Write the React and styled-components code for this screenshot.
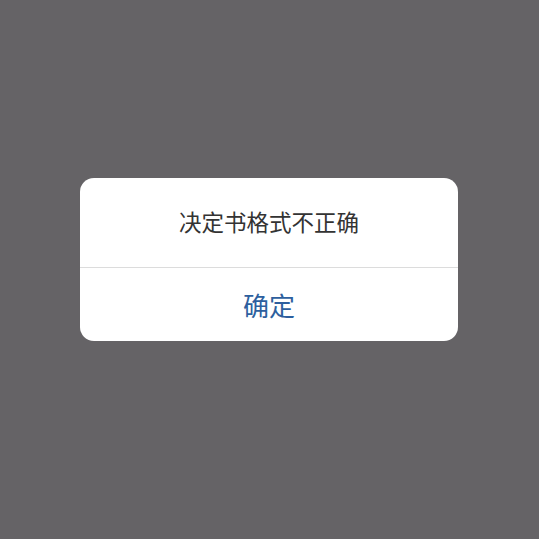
import React from 'react';
import styled, { createGlobalStyle } from 'styled-components';

const GlobalStyle = createGlobalStyle`
  html, body {
    margin: 0;
    padding: 0;
    background: #656366;
  }
`;

const Overlay = styled.div`
  width: 539px;
  height: 539px;
  display: flex;
  justify-content: flex-start;
  align-items: flex-start;
  padding: 178px 0 0 80px;
  box-sizing: border-box;
  background: #656366;
  font-family: "Noto Sans CJK SC", "Noto Sans", sans-serif;
`;

const Dialog = styled.div`
  width: 378px;
  background: #fff;
  border-radius: 14px;
  overflow: hidden;
  display: flex;
  flex-direction: column;
`;

const Message = styled.div`
  height: 90px;
  display: flex;
  align-items: center;
  justify-content: center;
  padding-bottom: 3px;
  font-size: 22.5px;
  color: #333;
  border-bottom: 1px solid #dcdcdc;
  box-sizing: border-box;
`;

const Button = styled.button`
  height: 73px;
  border: none;
  background: transparent;
  font-family: inherit;
  font-size: 26px;
  color: #2d5f9e;
  padding: 0;
  cursor: pointer;
`;

const App = () => (
  <>
    <GlobalStyle />
    <Overlay>
      <Dialog>
        <Message>决定书格式不正确</Message>
        <Button>确定</Button>
      </Dialog>
    </Overlay>
  </>
);

export default App;
